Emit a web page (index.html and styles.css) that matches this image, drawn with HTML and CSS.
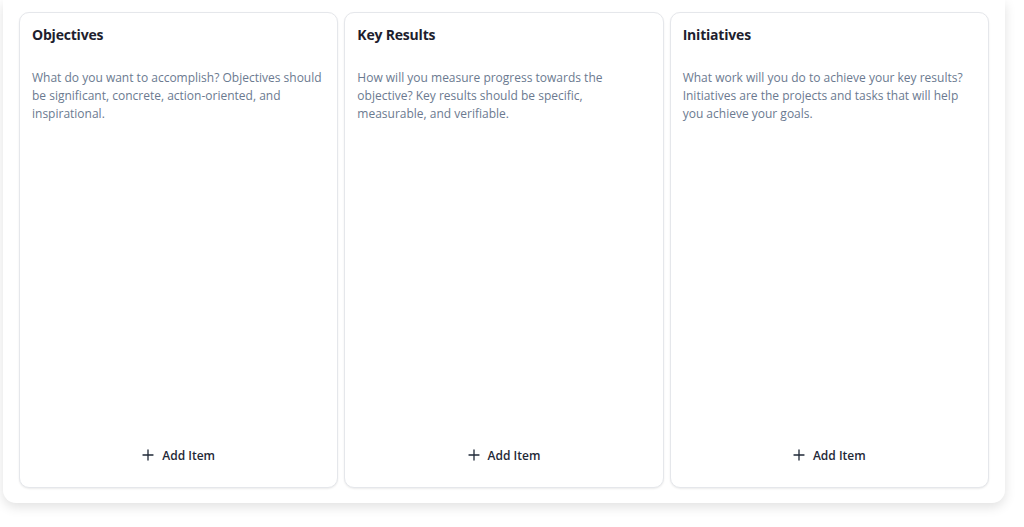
FILE: index.html
```html
<!DOCTYPE html>
<html>
<head>
<meta charset="utf-8">
<link rel="stylesheet" href="styles.css">
</head>
<body>
<div class="board">
  <div class="column">
    <h2 class="title">Objectives</h2>
    <p class="desc">What do you want to accomplish? Objectives should be significant, concrete, action-oriented, and inspirational.</p>
    <div class="spacer"></div>
    <button class="add"><svg class="plus" viewBox="0 0 12 12" width="12" height="12"><path d="M6 1v10M1 6h10" stroke="#1f2937" stroke-width="1.3" stroke-linecap="round"/></svg><span>Add Item</span></button>
  </div>
  <div class="column">
    <h2 class="title">Key Results</h2>
    <p class="desc">How will you measure progress towards the objective? Key results should be specific, measurable, and verifiable.</p>
    <div class="spacer"></div>
    <button class="add"><svg class="plus" viewBox="0 0 12 12" width="12" height="12"><path d="M6 1v10M1 6h10" stroke="#1f2937" stroke-width="1.3" stroke-linecap="round"/></svg><span>Add Item</span></button>
  </div>
  <div class="column">
    <h2 class="title">Initiatives</h2>
    <p class="desc">What work will you do to achieve your key results? Initiatives are the projects and tasks that will help you achieve your goals.</p>
    <div class="spacer"></div>
    <button class="add"><svg class="plus" viewBox="0 0 12 12" width="12" height="12"><path d="M6 1v10M1 6h10" stroke="#1f2937" stroke-width="1.3" stroke-linecap="round"/></svg><span>Add Item</span></button>
  </div>
</div>
</body>
</html>
```
FILE: styles.css
```css
* { box-sizing: border-box; }
html, body { margin: 0; padding: 0; background: #ffffff; }
body {
  font-family: "Open Sans", "Liberation Sans", sans-serif;
  padding: 0 19px 0 3px;
  height: 527px;
  overflow: hidden;
}
.board {
  height: 503px;
  background: #ffffff;
  border-radius: 0 0 13px 13px;
  box-shadow: 0 4px 12px rgba(0, 0, 0, 0.12);
  padding: 12px 16px 15px 16px;
  display: grid;
  grid-template-columns: 1fr 1fr 1fr;
  column-gap: 6px;
}
.column {
  border: 1px solid #e5e7eb;
  border-radius: 10px;
  box-shadow: 0 1px 2px rgba(0, 0, 0, 0.08);
  padding: 12px 12px 15px 12px;
  display: flex;
  flex-direction: column;
  background: #fff;
  min-width: 0;
}
.title {
  margin: 0;
  font-size: 14px;
  line-height: 20px;
  font-weight: 700;
  color: #1e1e2e;
  letter-spacing: -0.2px;
}
.desc {
  margin: 24px 0 0 0;
  font-size: 12px;
  line-height: 18px;
  color: #6b7a90;
}
.spacer { flex: 1; }
.add {
  align-self: center;
  display: flex;
  align-items: center;
  gap: 8px;
  height: 32px;
  padding: 0 10px;
  border: 0;
  background: transparent;
  font-family: inherit;
  font-size: 12px;
  font-weight: 600;
  color: #1f2937;
  margin-bottom: 1px;
}
.plus { display: block; }
```
